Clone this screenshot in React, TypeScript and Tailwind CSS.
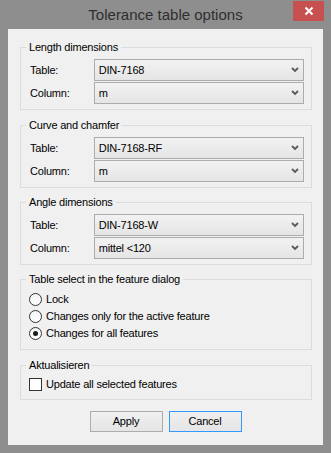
import React from "react";

function Chevron() {
  return (
    <svg width="8" height="6" viewBox="0 0 8 6" className="shrink-0">
      <path d="M1 1 L4 4 L7 1" fill="none" stroke="#5a5a5a" strokeWidth="1.8" />
    </svg>
  );
}

function Combo({ value }: { value: string }) {
  return (
    <div className="w-[211px] h-[22px] border border-[#acacac] bg-linear-to-b from-[#f2f2f2] to-[#e5e5e5] flex items-center pl-[4px] pr-[4px]">
      <span className="flex-1 leading-[13px]">{value}</span>
      <Chevron />
    </div>
  );
}

function Row({ label, value }: { label: string; value: string }) {
  return (
    <div className="flex items-center">
      <span className="w-[64px] leading-[13px]">{label}</span>
      <Combo value={value} />
    </div>
  );
}

function Group({
  title,
  children,
  className = "",
}: {
  title: string;
  children: React.ReactNode;
  className?: string;
}) {
  return (
    <fieldset className={"border border-[#dcdcdc] min-w-0 " + className}>
      <legend className="ml-[5px] px-[3px] leading-[13px]">{title}</legend>
      {children}
    </fieldset>
  );
}

function ComboGroup({
  title,
  table,
  column,
  className = "",
}: {
  title: string;
  table: string;
  column: string;
  className?: string;
}) {
  return (
    <Group title={title} className={className}>
      <div className="flex flex-col gap-[1px] pl-[9px] pr-[7px] pt-[5px] pb-[5px]">
        <Row label="Table:" value={table} />
        <Row label="Column:" value={column} />
      </div>
    </Group>
  );
}

function Radio({ label, checked = false }: { label: string; checked?: boolean }) {
  return (
    <div className="h-[17px] flex items-center">
      <span className="w-[13px] h-[13px] rounded-full border border-[#333333] bg-linear-to-b from-[#f4f4f4] to-[#ffffff] flex items-center justify-center">
        {checked && <span className="w-[5px] h-[5px] rounded-full bg-[#1a1a1a]" />}
      </span>
      <span className="ml-[4px] leading-[13px]">{label}</span>
    </div>
  );
}

function Button({ label, focused = false }: { label: string; focused?: boolean }) {
  return (
    <div
      className={
        "w-[73px] h-[21px] border bg-linear-to-b from-[#f0f0f0] to-[#e5e5e5] flex items-center justify-center leading-[13px] " +
        (focused ? "border-[#3399ff]" : "border-[#adadad]")
      }
    >
      {label}
    </div>
  );
}

export default function App() {
  return (
    <div className="w-[331px] h-[453px] bg-[#8e8e8e] flex flex-col px-[7px] font-['Liberation_Sans',Arial,sans-serif] text-[11px] tracking-[-0.2px] text-black">
      <div className="h-[29px] grid grid-cols-[1fr_auto_1fr] items-center">
        <div />
        <div className="text-[15px] tracking-normal text-[#2e2e2e] leading-[18px]">
          Tolerance table options
        </div>
        <div className="justify-self-end self-start mt-[1px] w-[31px] h-[20px] bg-[#c75050] flex items-center justify-center">
          <svg width="10" height="10" viewBox="0 0 10 10">
            <path d="M1.5 1.5 L8.5 8.5 M8.5 1.5 L1.5 8.5" stroke="#ffffff" strokeWidth="2" />
          </svg>
        </div>
      </div>
      <div className="mx-[1px] h-[416px] bg-[#f0f0f0] flex flex-col pl-[12px] pr-[11px] pt-[12px]">
        <ComboGroup title="Length dimensions" table="DIN-7168" column="m" />
        <ComboGroup title="Curve and chamfer" table="DIN-7168-RF" column="m" className="mt-[9px]" />
        <ComboGroup title="Angle dimensions" table="DIN-7168-W" column="mittel <120" className="mt-[8px]" />
        <Group title="Table select in the feature dialog" className="mt-[8px]">
          <div className="flex flex-col pl-[8px] pt-[5px] pb-[7px]">
            <Radio label="Lock" />
            <Radio label="Changes only for the active feature" />
            <Radio label="Changes for all features" checked />
          </div>
        </Group>
        <Group title="Aktualisieren" className="mt-[9px]">
          <div className="flex flex-col pl-[8px] pt-[4px] pb-[6px]">
            <div className="h-[17px] flex items-center">
              <span className="w-[13px] h-[13px] border border-[#333333] bg-white" />
              <span className="ml-[4px] leading-[13px]">Update all selected features</span>
            </div>
          </div>
        </Group>
        <div className="flex justify-center gap-[6px] mt-[11px] pr-[1px]">
          <Button label="Apply" />
          <Button label="Cancel" focused />
        </div>
      </div>
    </div>
  );
}
